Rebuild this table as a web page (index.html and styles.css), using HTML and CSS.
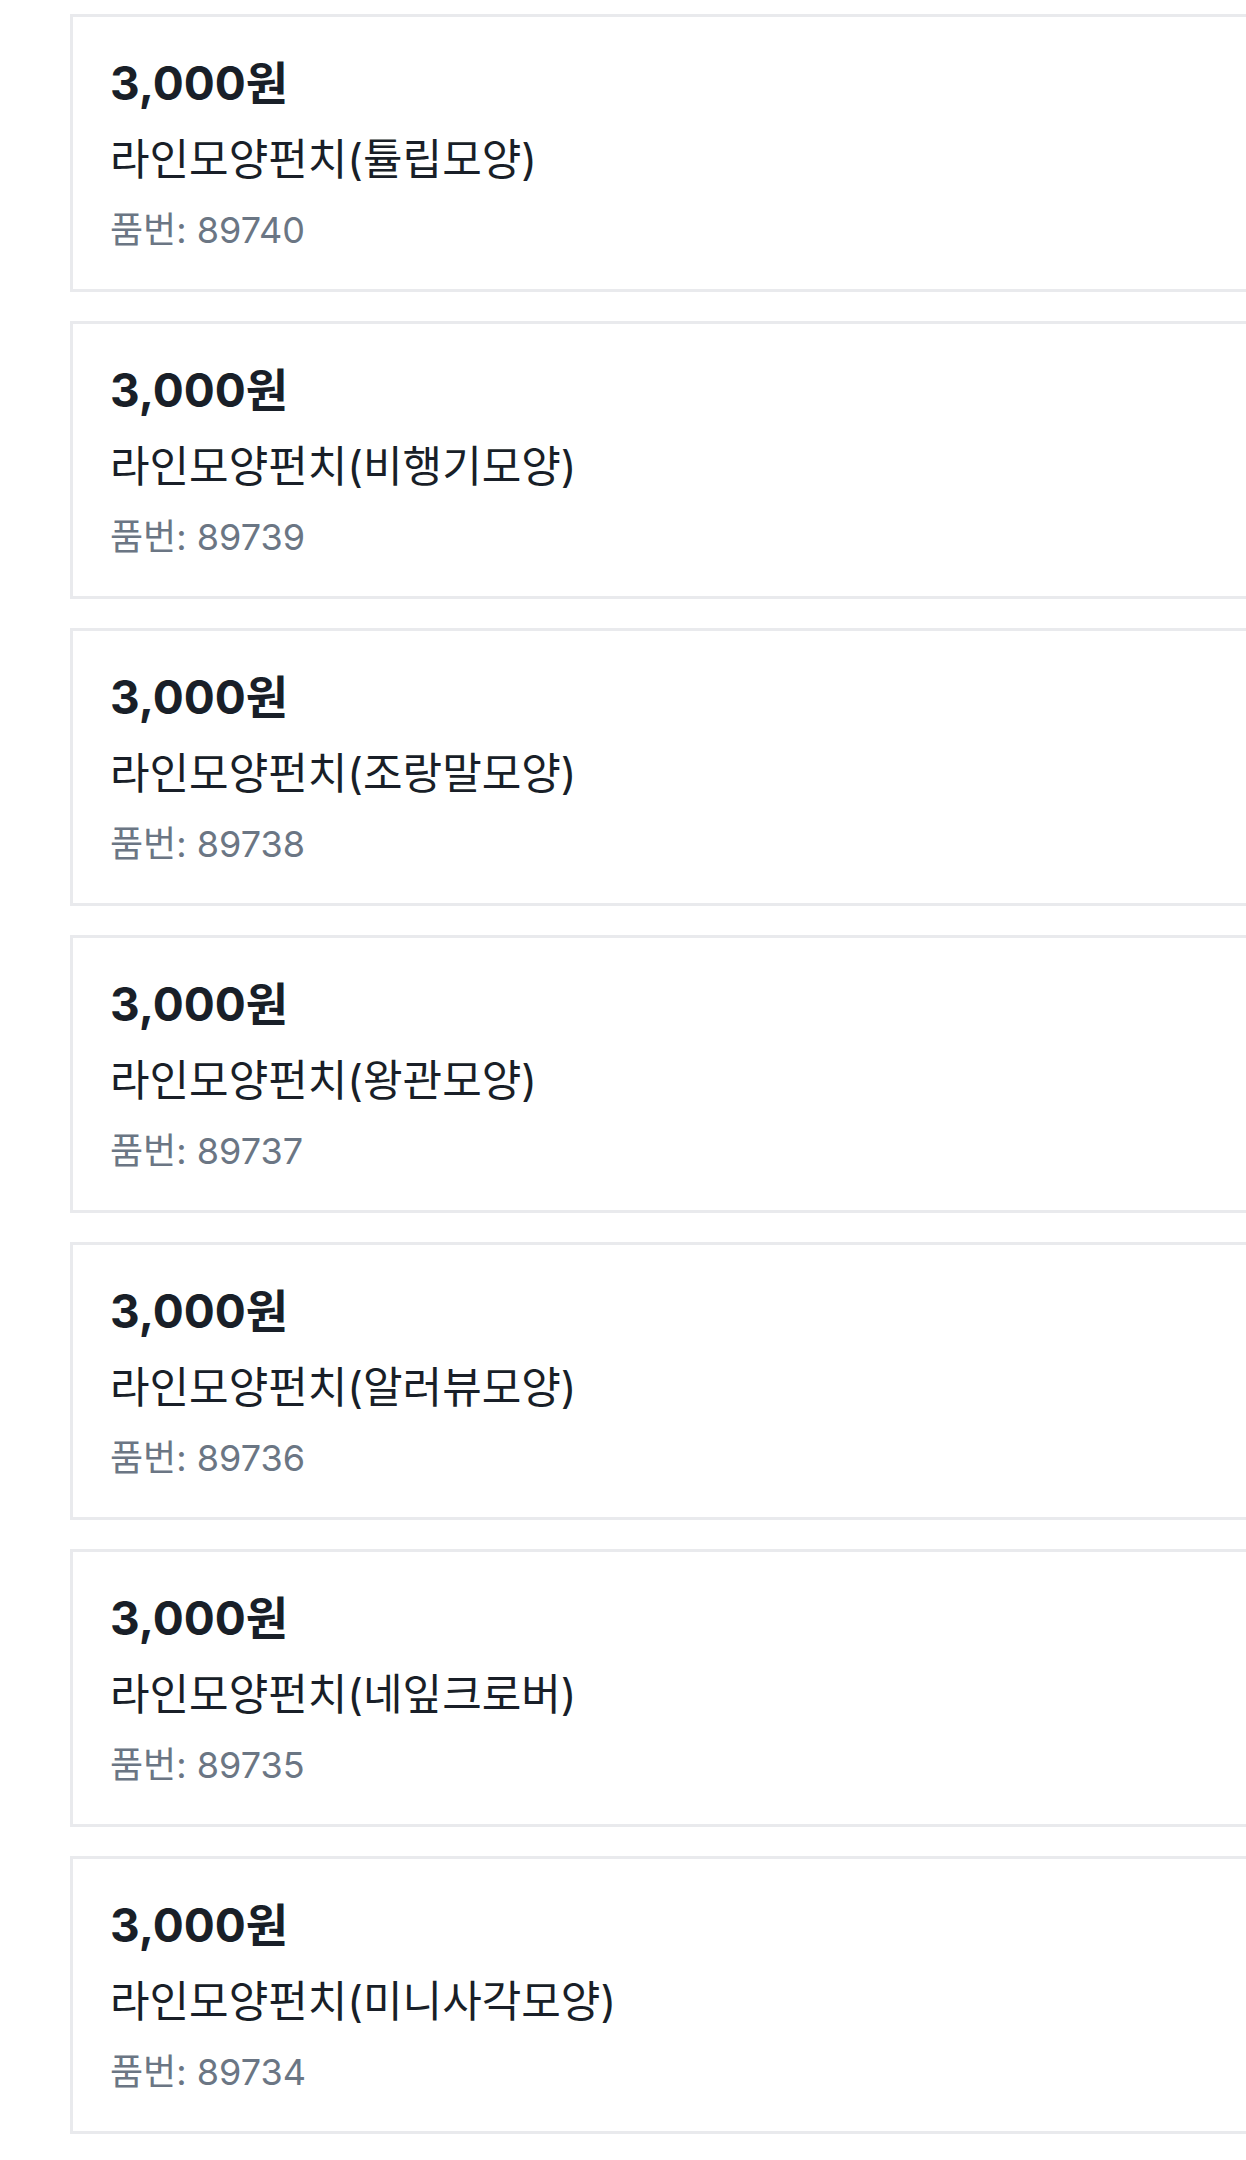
FILE: index.html
```html
<!DOCTYPE html>
<html lang="ko">
  <head>
    <meta charset="UTF-8" />
    <meta name="viewport" content="width=device-width, initial-scale=1.0" />
    <title>상품 목록</title>
    <link rel="stylesheet" href="styles.css">
  </head>
  <body>
    <ul class="itemList">
      <li class="item">
        <p class="price">3,000원</p>
        <p class="name">라인모양펀치(튤립모양)</p>
        <p class="code">품번: 89740</p>
      </li>
      <li class="item">
        <p class="price">3,000원</p>
        <p class="name">라인모양펀치(비행기모양)</p>
        <p class="code">품번: 89739</p>
      </li>
      <li class="item">
        <p class="price">3,000원</p>
        <p class="name">라인모양펀치(조랑말모양)</p>
        <p class="code">품번: 89738</p>
      </li>
      <li class="item">
        <p class="price">3,000원</p>
        <p class="name">라인모양펀치(왕관모양)</p>
        <p class="code">품번: 89737</p>
      </li>
      <li class="item">
        <p class="price">3,000원</p>
        <p class="name">라인모양펀치(알러뷰모양)</p>
        <p class="code">품번: 89736</p>
      </li>
      <li class="item">
        <p class="price">3,000원</p>
        <p class="name">라인모양펀치(네잎크로버)</p>
        <p class="code">품번: 89735</p>
      </li>
      <li class="item">
        <p class="price">3,000원</p>
        <p class="name">라인모양펀치(미니사각모양)</p>
        <p class="code">품번: 89734</p>
      </li>
    </ul>
  </body>
</html>
```

FILE: styles.css
```css
body {
  margin: 0;
  background: #fff;
  font-family: Inter, "Noto Sans CJK KR", sans-serif;
  color: #191f28;
}

.itemList {
  list-style: none;
  margin: 0;
  padding: 14px 0 0 70px;
  display: flex;
  flex-direction: column;
  gap: 29px;
}

/* 카드 오른쪽은 화면 밖으로 이어짐 */
.item {
  border: 3px solid #e9eaed;
  border-right: 0;
  padding: 36px 40px 34px 37px;
}

.item p {
  margin: 0;
}

.price {
  font-size: 46px;
  line-height: 60px;
  font-weight: 700;
}

.name {
  margin-top: 17px !important;
  font-size: 43px;
  line-height: 58px;
}

.code {
  margin-top: 17px !important;
  font-size: 36px;
  line-height: 50px;
  color: #6b7684;
}
```
